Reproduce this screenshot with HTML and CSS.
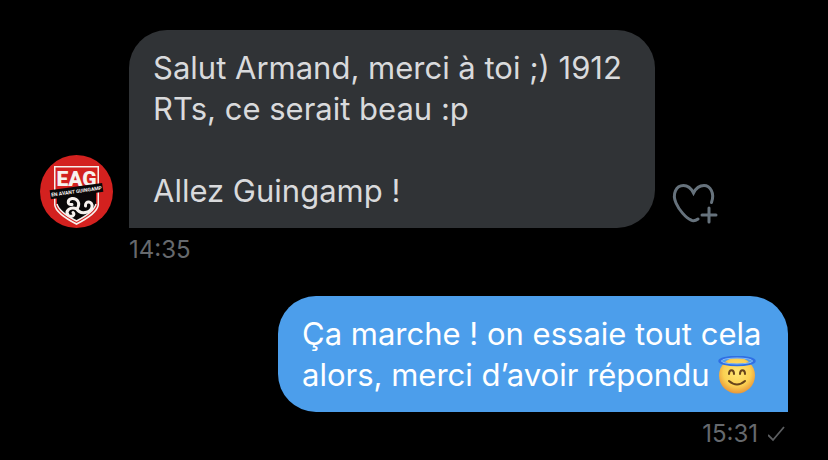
FILE: index.html
```html
<!DOCTYPE html>
<html lang="fr">
<head>
  <meta charset="UTF-8">
  <meta name="viewport" content="width=device-width, initial-scale=1">
  <title>Messages - En Avant Guingamp</title>
  <link rel="stylesheet" href="styles.css">
</head>
<body>
  <main class="conversation">
    <!-- Received -->
    <article class="message received">
      <div class="message-row">
        <svg class="avatar" viewBox="0 0 73 73" role="img" aria-label="En Avant Guingamp">
          <circle cx="36.5" cy="36.5" r="36.5" fill="#d3211f"/>
          <path d="M14 11H59V50Q58 59 36.500 70Q15 59 14 50Z" fill="#f6f1ee"/>
          <path d="M15.500 12.500H57.500V50Q56 58 36.500 68Q17 58 15.500 50Z" fill="#d3211f"/>
          <path d="M17 40L56 34V49Q54 57 36.500 66Q19 57 17 49Z" fill="#090708"/>
          <path d="M17 49Q19 57 36.500 66Q54 57 56 49" fill="none" stroke="#f6f1ee" stroke-width="1.500"/>
          <g fill="none" stroke="#f6f1ee" stroke-width="3" stroke-linecap="round">
            <path d="M37 54C41 48 37 43 32 43.500C27 44.500 27 50.500 32 49.500"/>
            <path d="M37 54C40 60 51 58 52 52C53 46 45 45 45.500 51"/>
            <path d="M37 54C30 51 25 56 28 60C31 63 36 60 33 57.500"/>
          </g>
          <text class="crest-name" x="36.500" y="31" text-anchor="middle">EAG</text>
          <g transform="rotate(-8 37 36)">
            <rect x="10" y="31.500" width="53" height="9" fill="#090708"/>
            <text class="crest-banner" x="36.500" y="38" text-anchor="middle">EN AVANT GUINGAMP</text>
          </g>
        </svg>
        <div class="bubble">
          <p>Salut Armand, merci à toi ;) 1912 RTs, ce serait beau :p</p>
          <p class="paragraph">Allez Guingamp !</p>
        </div>
        <button class="react" type="button" aria-label="Ajouter une réaction">
          <svg viewBox="0 0 48 48" width="48" height="48" fill="none" stroke="#66727c" stroke-width="3" stroke-linecap="round">
            <path d="M38.500 22.500C42 13 37 5.500 31 5.500C26 5.500 22.500 9 20.500 13C18.500 9 15 5.500 10.500 5.500C3 5.500 -1 14 3 23C6 30 13 38 18 40Q21 42 25 39"/>
            <path d="M36 28V42M29 35H43"/>
          </svg>
        </button>
      </div>
      <div class="meta"><time datetime="14:35">14:35</time></div>
    </article>

    <!-- Sent -->
    <article class="message sent">
      <div class="message-row">
        <div class="bubble">
          <p>Ça marche ! on essaie tout cela alors, merci d’avoir répondu
            <svg class="emoji" viewBox="0 0 38 38" role="img" aria-label="Ange souriant">
              <defs>
                <radialGradient id="face" cx="50%" cy="42%" r="58%">
                  <stop offset="0" stop-color="#ffe875"/>
                  <stop offset="0.65" stop-color="#fbd052"/>
                  <stop offset="1" stop-color="#e9973a"/>
                </radialGradient>
              </defs>
              <circle cx="19" cy="19.500" r="18" fill="url(#face)"/>
              <ellipse cx="19" cy="5" rx="17.500" ry="4" fill="none" stroke="#2f6fe4" stroke-width="2.500"/>
              <ellipse cx="19" cy="5" rx="15.500" ry="3" fill="none" stroke="#86bcf8" stroke-width="1"/>
              <path d="M11 18C11 13 16 13 16 18M22 18C22 13 27 13 27 18" fill="none" stroke="#67441b" stroke-width="2" stroke-linecap="round"/>
              <path d="M11 25Q19 32 27 25" fill="none" stroke="#67441b" stroke-width="2" stroke-linecap="round"/>
            </svg>
          </p>
        </div>
      </div>
      <div class="meta">
        <time datetime="15:31">15:31</time>
        <svg class="check" viewBox="0 0 20 20" width="20" height="20" role="img" aria-label="Envoyé">
          <path d="M0 11L5 16L16 3" fill="none" stroke="#5c5e61" stroke-width="1.800"/>
        </svg>
      </div>
    </article>
  </main>
</body>
</html>
```
FILE: styles.css
```css
* {
  box-sizing: border-box;
  margin: 0;
  padding: 0;
}

body {
  font-family: Inter, 'Liberation Sans', sans-serif;
  background: #000;
  color: #d9dadc;
}

.conversation {
  display: flex;
  flex-direction: column;
  gap: 32px;
  padding: 30px 40px 12px;
}

.message {
  display: flex;
  flex-direction: column;
  gap: 8px;
}

.message-row {
  display: flex;
  align-items: flex-end;
}

/* Bubbles */
.bubble {
  padding: 17px 24px;
  border-radius: 38px;
  font-size: 31px;
  line-height: 41px;
}

.received .bubble {
  max-width: 526px;
  margin-left: 16px;
  background: #303336;
  border-bottom-left-radius: 0;
}

.sent .bubble {
  max-width: 510px;
  background: #4c9eeb;
  color: #fff;
  border-bottom-right-radius: 0;
}

.paragraph {
  margin-top: 41px;
}

.sent .message-row,
.sent .meta {
  justify-content: flex-end;
}

/* Avatar */
.avatar {
  width: 73px;
  height: 73px;
  flex-shrink: 0;
}

.crest-name {
  font: 900 21px Roboto, sans-serif;
  fill: #f6f1ee;
}

.crest-banner {
  font: bold 5px Roboto, sans-serif;
  fill: #f6f1ee;
}

.react {
  flex-shrink: 0;
  margin-left: 18px;
  border: none;
  background: none;
  cursor: pointer;
}

.react svg {
  display: block;
  overflow: visible;
}

.emoji {
  width: 38px;
  height: 38px;
  vertical-align: -8px;
}

/* Time and status */
.meta {
  display: flex;
  align-items: center;
  gap: 10px;
  font-size: 24px;
  line-height: 28px;
  color: #66696d;
}

.received .meta {
  padding-left: 89px;
}
```
